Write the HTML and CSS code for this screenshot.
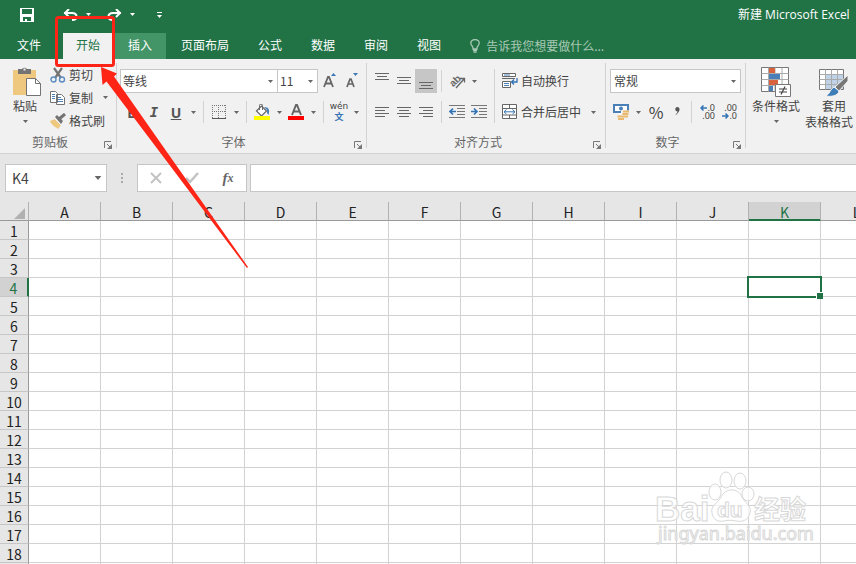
FILE: index.html
```html
<!DOCTYPE html>
<html lang="zh-CN">
<head>
<meta charset="utf-8">
<title>新建 Microsoft Excel</title>
<link rel="stylesheet" href="styles.css">
</head>
<body>
<svg class="defs" aria-hidden="true">
  <symbol id="caret" viewBox="0 0 5 3"><path d="M0 0h5L2.500 3z" fill="currentColor"/></symbol>
  <symbol id="launch" viewBox="0 0 8 8"><path d="M.5 7V.5H7M3 3l3 3" fill="none" stroke="currentColor"/><path d="M8 3v5H3z" fill="currentColor"/></symbol>
</svg>

<header class="titlebar">
  <div class="quick">
    <button aria-label="保存"><svg width="14" height="14" viewBox="0 0 14 14"><path d="M0 0h14v14H0z" fill="#fff"/><path d="M2 1h10v5H2zM3 9h8v4H7v-2H5v2H3z" fill="#217346"/></svg></button>
    <button class="undo" aria-label="撤消"><svg width="15" height="12" viewBox="0 0 15 12"><path d="M1 4h8c6 0 6 7 0 7M6 0L2 4l4 4" fill="none" stroke="#fff" stroke-width="2"/></svg><svg class="caret"><use href="#caret"/></svg></button>
    <button class="redo" aria-label="恢复"><svg width="15" height="12" viewBox="0 0 15 12"><path d="M14 4H6c-6 0-6 7 0 7M9 0l4 4-4 4" fill="none" stroke="#fff" stroke-width="2"/></svg><svg class="caret"><use href="#caret"/></svg></button>
    <button class="custom" aria-label="自定义快速访问工具栏"><svg width="5" height="6" viewBox="0 0 5 6"><path d="M0 0h5v1H0zM0 3h5L2.500 6z" fill="#fff"/></svg></button>
  </div>
  <div class="title">新建 Microsoft Excel</div>
</header>

<nav class="tabs">
  <a class="file" href="#file">文件</a>
  <a class="active" href="#home">开始</a>
  <a class="hover" href="#insert">插入</a>
  <a href="#layout">页面布局</a>
  <a href="#formulas">公式</a>
  <a href="#data">数据</a>
  <a href="#review">审阅</a>
  <a href="#view">视图</a>
  <label class="tell"><svg width="10" height="14" viewBox="0 0 10 14"><path d="M3 10V9C3 7 .8 6.500.8 4a4.200 3.500 0 0 1 8.400 0C9.200 6.500 7 7 7 9v1zM3 11.500h4M3.500 13.200h3" fill="none" stroke="#a9c9b5" stroke-width="1.300"/></svg><input type="text" placeholder="告诉我您想要做什么..." aria-label="告诉我您想要做什么"></label>
</nav>

<main class="ribbon">
  <section class="group clipboard">
    <div class="body">
      <button class="big paste"><svg width="30" height="30" viewBox="0 0 30 30"><path d="M1 3h23v25H1z" fill="#edc87e"/><path d="M6 2h4a3 3 0 0 1 5 0h4v5H6z" fill="#737373"/><path d="M11.500 1.500h2v2h-2z" fill="#f1f1f1"/><path d="M14.500 11.500h9l5 5v12h-14z" fill="#fff" stroke="#737373"/><path d="M23.500 11.500v5h5" fill="none" stroke="#737373"/></svg><span>粘贴</span><svg class="caret"><use href="#caret"/></svg></button>
      <div class="stack">
        <button><svg width="16" height="16" viewBox="0 0 16 16"><path d="M4 1l7 10M12 1L5 11" stroke="#737373" stroke-width="2.200"/><circle cx="3.500" cy="12.500" r="2.500" fill="none" stroke="#5b8cc0" stroke-width="1.400"/><circle cx="12" cy="12.500" r="2.500" fill="none" stroke="#5b8cc0" stroke-width="1.400"/></svg>剪切</button>
        <button><svg width="16" height="16" viewBox="0 0 16 16"><path d="M.5 1.500h5l2 2v9h-7zM6.500 4.500h5l3 3v7h-8z" fill="#fff" stroke="#737373"/><path d="M2 4.500h3M2 6.500h3M2 8.500h3M8 7.500h3M8 9.500h5M8 11.500h5" stroke="#4a7fb8"/></svg>复制<svg class="caret"><use href="#caret"/></svg></button>
        <button><svg width="16" height="16" viewBox="0 0 16 16"><path d="M0 8l5-2 6 6-3 4C6 14 2 13 0 8z" fill="#edc87e"/><path d="M5 4l2-2 6 6-2 3z" fill="#737373"/><path d="M9 6l6-5" stroke="#737373" stroke-width="3"/><path d="M5 6l6 6" stroke="#f1f1f1"/></svg>格式刷</button>
      </div>
    </div>
    <footer>剪贴板<button aria-label="剪贴板设置"><svg width="8" height="8"><use href="#launch"/></svg></button></footer>
  </section>

  <section class="group font">
    <div class="body column">
      <div class="row">
        <div class="combo face"><select aria-label="字体"><option>等线</option></select><svg class="caret"><use href="#caret"/></svg></div>
        <div class="combo size"><select aria-label="字号"><option>11</option></select><svg class="caret"><use href="#caret"/></svg></div>
        <button class="tool grow" aria-label="增大字号"><svg width="16" height="16" viewBox="0 0 16 16"><path d="M2 14L6 4h1l4 10M3.500 10.500h6" fill="none" stroke="#666" stroke-width="1.800"/><path d="M9 3h5l-2.500-3z" fill="#3c78b4"/></svg></button>
        <button class="tool" aria-label="减小字号"><svg width="16" height="16" viewBox="0 0 16 16"><path d="M3 14l3-8h1l3 8M4 11h5" fill="none" stroke="#666" stroke-width="1.700"/><path d="M9 0h5l-2.500 3z" fill="#3c78b4"/></svg></button>
      </div>
      <div class="row">
        <button class="tool letter bold">B</button><button class="tool letter italic">I</button><button class="tool letter under">U</button>
        <button class="drop" aria-label="下划线选项"><svg class="caret"><use href="#caret"/></svg></button><i class="sep"></i>
        <button class="tool" aria-label="边框"><svg width="14" height="14" viewBox="0 0 14 14"><path d="M0 .5h14M0 6.500h14M.5 0v14M6.500 0v14M13.500 0v14" stroke="#777" stroke-dasharray="1 1"/><path d="M0 13.500h14" stroke="#555"/></svg></button>
        <button class="drop" aria-label="边框选项"><svg class="caret"><use href="#caret"/></svg></button><i class="sep"></i>
        <button class="tool" aria-label="填充颜色"><svg width="16" height="16" viewBox="0 0 16 16"><path d="M2.500 7l5-5 5 5-5 5z" fill="#fff" stroke="#666" stroke-width="1.200"/><path d="M5.500 6V1.500a1.300 1.300 0 0 1 3 0V6" fill="none" stroke="#666"/><path d="M10 3c5 0 6 3 4.500 8L13 9V6z" fill="#4a7fb8"/><path d="M0 12h16v4H0z" fill="#ff0"/></svg></button>
        <button class="drop" aria-label="填充颜色选项"><svg class="caret"><use href="#caret"/></svg></button>
        <button class="tool" aria-label="字体颜色"><svg width="16" height="16" viewBox="0 0 16 16"><path d="M4 11l4-10h1l4 10M5.500 7.500h6" fill="none" stroke="#666" stroke-width="2"/><path d="M0 12h16v4H0z" fill="#f00"/></svg></button>
        <button class="drop" aria-label="字体颜色选项"><svg class="caret"><use href="#caret"/></svg></button><i class="sep"></i>
        <button class="tool phonetic" aria-label="拼音"><span>wén</span><b>文</b></button>
        <button class="drop" aria-label="拼音选项"><svg class="caret"><use href="#caret"/></svg></button>
      </div>
    </div>
    <footer>字体<button aria-label="字体设置"><svg width="8" height="8"><use href="#launch"/></svg></button></footer>
  </section>

  <section class="group align">
    <div class="body">
      <div class="column">
        <div class="row">
          <button class="tool" aria-label="顶端对齐"><svg width="14" height="16" viewBox="0 0 14 16"><path d="M0 .5h14M2 3.500h10M0 6.500h14" stroke="#666"/></svg></button>
          <button class="tool" aria-label="垂直居中"><svg width="14" height="16" viewBox="0 0 14 16"><path d="M0 4.500h14M2 7.500h10M0 10.500h14" stroke="#666"/></svg></button>
          <button class="tool pressed" aria-label="底端对齐"><svg width="14" height="16" viewBox="0 0 14 16"><path d="M0 9.500h14M2 12.500h10M0 15.500h14" stroke="#666"/></svg></button><i class="sep"></i>
          <button class="tool" aria-label="方向"><svg class="orient" width="18" height="16" viewBox="0 0 18 16"><path d="M8 15L16 6M12 5.500h4.500v4" fill="none" stroke="#666" stroke-width="1.300"/><text x="1" y="12" transform="rotate(-45 6 8)" class="ab">ab</text></svg></button>
          <button class="drop" aria-label="方向选项"><svg class="caret"><use href="#caret"/></svg></button>
        </div>
        <div class="row">
          <button class="tool" aria-label="左对齐"><svg width="14" height="12" viewBox="0 0 14 12"><path d="M0 1.500h14M0 4.500h10M0 7.500h14M0 10.500h10" stroke="#666"/></svg></button>
          <button class="tool" aria-label="居中"><svg width="14" height="12" viewBox="0 0 14 12"><path d="M0 1.500h14M2 4.500h10M0 7.500h14M2 10.500h10" stroke="#666"/></svg></button>
          <button class="tool" aria-label="右对齐"><svg width="14" height="12" viewBox="0 0 14 12"><path d="M0 1.500h14M4 4.500h10M0 7.500h14M4 10.500h10" stroke="#666"/></svg></button><i class="sep"></i>
          <button class="tool" aria-label="减少缩进量"><svg width="16" height="14" viewBox="0 0 16 14"><path d="M0 .5h16M8 3.500h8M8 6.500h8M8 9.500h8M0 12.500h16" stroke="#777"/><path d="M1 6.500h6M4 3.500l-3 3 3 3" fill="none" stroke="#3474b4" stroke-width="1.700"/></svg></button>
          <button class="tool" aria-label="增加缩进量"><svg width="16" height="14" viewBox="0 0 16 14"><path d="M0 .5h16M8 3.500h8M8 6.500h8M8 9.500h8M0 12.500h16" stroke="#777"/><path d="M0 6.500h6M3 3.500l3 3-3 3" fill="none" stroke="#3474b4" stroke-width="1.700"/></svg></button>
        </div>
      </div>
      <i class="sep tall"></i>
      <div class="column wide">
        <button class="row"><svg width="16" height="16" viewBox="0 0 16 16"><path d="M.5.5h13v3H.5zM.5 8.500h8v6h-8z" fill="#fff" stroke="#666"/><path d="M2 2h6M2 10.500h5M2 12.500h5" stroke="#4a7fb8"/><path d="M0 5.500h13" stroke="#666"/><path d="M15 5v4h-5M12 6.500L9.500 9l2.500 2.500" fill="none" stroke="#3474b4" stroke-width="1.300"/></svg>自动换行</button>
        <button class="row"><svg width="16" height="16" viewBox="0 0 16 16"><path d="M.5.5h14v14H.5zM.5 4.500h14M.5 11h14M7.500.5v4M7.500 11v3.500" fill="#fff" stroke="#666"/><path d="M2 7.800h11M4.500 5.500L2 7.800 4.500 10M10.500 5.500L13 7.800 10.500 10" fill="none" stroke="#3474b4"/></svg>合并后居中<svg class="caret"><use href="#caret"/></svg></button>
      </div>
    </div>
    <footer>对齐方式<button aria-label="对齐设置"><svg width="8" height="8"><use href="#launch"/></svg></button></footer>
  </section>

  <section class="group number">
    <div class="body column">
      <div class="row"><div class="combo format"><select aria-label="数字格式"><option>常规</option></select><svg class="caret"><use href="#caret"/></svg></div></div>
      <div class="row">
        <button class="tool" aria-label="会计数字格式"><svg width="17" height="16" viewBox="0 0 17 16"><path d="M0 0h16v9H0z" fill="#4a7fb8"/><path d="M2 3V2h2a4 4 0 0 1 8 0h2v5h-2a4 3 0 0 1-8 0H2z" fill="#fff"/><circle cx="8" cy="4.500" r="2" fill="#4a7fb8"/><path d="M9 6.500h7v8H4v-4h5z" fill="#f1f1f1"/><path d="M0 0h16v5h-2V2H2v5h6v2H0z" fill="#4a7fb8"/><path d="M10 7.500h6M9.500 10h6M10 12.500h5M4.500 12.500h6M5 15h6" stroke="#e9b96e" stroke-width="2"/></svg></button>
        <button class="drop" aria-label="货币选项"><svg class="caret"><use href="#caret"/></svg></button>
        <button class="tool percent" aria-label="百分比样式">%</button>
        <button class="tool comma" aria-label="千位分隔样式"><svg width="5" height="8" viewBox="0 0 5 8"><path d="M2.500 0C5 0 6 4 1 8L.5 7.500C2 6.500 2.500 5 2.500 4.500-.5 4.500-.5 0 2.500 0z" fill="#555"/></svg></button><i class="sep"></i>
        <button class="tool decimals" aria-label="增加小数位数"><span><svg width="7" height="6" viewBox="0 0 7 6"><path d="M1 3h6M3.500.5L1 3l2.500 2.500" fill="none" stroke="#3474b4" stroke-width="1.500"/></svg>.0</span><span>.00</span></button>
        <button class="tool decimals" aria-label="减少小数位数"><span>.00</span><span><svg width="7" height="6" viewBox="0 0 7 6"><path d="M0 3h6M3.500.5L6 3 3.500 5.500" fill="none" stroke="#3474b4" stroke-width="1.500"/></svg>.0</span></button>
      </div>
    </div>
    <footer>数字<button aria-label="数字设置"><svg width="8" height="8"><use href="#launch"/></svg></button></footer>
  </section>

  <section class="group styles">
    <div class="body">
      <button class="big"><svg width="30" height="30" viewBox="0 0 30 30"><path d="M.5.5h27v24H.5z" fill="#fff" stroke="#777"/><path d="M.5 6.500h27M.5 12.500h27M.5 18.500h27M7.500.5v24M14 .5v24M21 .5v24" stroke="#aaa"/><path d="M8 1h6v5H8zM8 13h9v5H8z" fill="#d9623f"/><path d="M8 7h11v5H8zM8 19h4v5H8z" fill="#4a7fb8"/><path d="M14.500 17.500h15v12h-15z" fill="#fff" stroke="#777"/><path d="M18 22h8M18 25h8M24 19.500l-4 8" stroke="#444" stroke-width="1.200"/></svg><span>条件格式</span><svg class="caret"><use href="#caret"/></svg></button>
      <button class="big table-style"><svg width="30" height="30" viewBox="0 0 30 30"><path d="M.5 2.500h24v20H.5z" fill="#fff" stroke="#777"/><path d="M7 8h17v14H7z" fill="#bfd2e8"/><path d="M.5 7.500h24M.5 12.500h24M.5 17.500h24M6.500 2.500v20M12.500 2.500v20M18.500 2.500v20" stroke="#aaa"/><path d="M29 8v6l-9 10-4-4z" fill="#777" stroke="#f1f1f1"/><path d="M15 20l5 4c-1 5-8 6-13 5 4-2 4-7 8-9z" fill="#3d7db8" stroke="#f1f1f1"/></svg><span>套用</span><span>表格格式</span></button>
    </div>
  </section>
</main>

<div class="formulabar">
  <div class="combo name"><input type="text" value="K4" aria-label="名称框"><svg class="caret"><use href="#caret"/></svg></div>
  <svg class="grip" width="2" height="12" viewBox="0 0 2 12"><path d="M0 1h2v2H0zM0 5h2v2H0zM0 9h2v2H0z" fill="#aaa"/></svg>
  <div class="actions">
    <button aria-label="取消"><svg width="12" height="12" viewBox="0 0 12 12"><path d="M1 1l10 10M11 1L1 11" stroke="#c3c3c3" stroke-width="2"/></svg></button>
    <button aria-label="输入"><svg width="14" height="12" viewBox="0 0 14 12"><path d="M1 6l4 4 8-9" fill="none" stroke="#c3c3c3" stroke-width="2.500"/></svg></button>
    <button class="fx" aria-label="插入函数">f<sub>x</sub></button>
  </div>
  <input class="formula" type="text" aria-label="编辑栏">
</div>

<div class="sheet">
  <table>
    <thead><tr id="columns"><th class="corner" aria-label="全选"><svg width="11" height="11" viewBox="0 0 11 11"><path d="M11 0v11H0z" fill="#b1b1b1"/></svg></th></tr></thead>
    <tbody id="cells"></tbody>
  </table>
</div>

<svg class="overlay" width="856" height="564" viewBox="0 0 856 564">
  <g class="watermark">
    <text x="655" y="521" class="brand">Bai</text>
    <path d="M712 513c-2-7 6-10 9-16 4-9 17-10 21 0 3 6 10 9 8 16-2 8-8 9-14 8-4-1-8-1-12 0-6 1-11-1-12-8z"/>
    <ellipse cx="715" cy="492" rx="6" ry="8"/><ellipse cx="726" cy="480" rx="6" ry="8"/><ellipse cx="740" cy="481" rx="6" ry="8"/><ellipse cx="748" cy="494" rx="6" ry="7"/>
    <text x="717" y="517" class="du">du</text>
    <text x="754" y="519" class="cn">经验</text>
    <text x="658" y="540" class="site">jingyan.baidu.com</text>
  </g>
  <rect x="56.500" y="17.500" width="57" height="48" rx="2" fill="none" stroke="#fe2517" stroke-width="3"/>
  <path d="M101 67L117 73.500 114 76.500 120 85 169 155 248 267 247 268 162 155 106.500 81.500 102.500 85z" fill="#fe2517"/>
</svg>
<script src="sheet.js"></script>
</body>
</html>
```
FILE: styles.css
```css
* { box-sizing: border-box; }
body {
  margin: 0; height: 100vh; overflow: hidden; position: relative;
  display: flex; flex-direction: column;
  font: 12px/16px "Noto Sans CJK SC", sans-serif; color: #444; background: #fff;
}
button, input, select { font: inherit; color: inherit; background: none; border: 0; padding: 0; margin: 0; outline: 0; }
button { display: flex; align-items: center; white-space: nowrap; }
svg { display: block; flex: none; }
.defs { position: absolute; width: 0; height: 0; }
.caret { width: 5px; height: 3px; color: #666; }

.titlebar { display: flex; justify-content: space-between; height: 33px; background: #217346; color: #fff; overflow: hidden; flex: none; }
.quick { display: flex; align-items: center; padding: 0 0 4px 20px; }
.quick .caret { color: #fff; }
.quick button { gap: 8px; }
.undo { margin-left: 29px; }
.redo { margin-left: 16px; }
.custom { margin-left: 22px; }
.title { flex: none; width: 118px; padding-top: 7px; white-space: nowrap; font-family: "Open Sans", "Noto Sans CJK SC", sans-serif; }

.tabs { display: flex; height: 26px; background: #217346; flex: none; }
.tabs a { color: #fff; text-decoration: none; padding: 0 14px 0 15px; line-height: 24px; white-space: nowrap; }
.tabs .file { padding: 0 22px 0 17px; }
.tabs .active { background: #f1f1f1; color: #217346; padding: 0 15px 0 13px; }
.tabs .hover { background: #439467; padding: 0 14px 0 13px; }
.tell { display: flex; align-items: center; gap: 6px; margin-left: 15px; }
.tell input { width: 160px; color: #fff; }
.tell input::placeholder { color: #a9c9b5; opacity: 1; }

.ribbon { display: flex; background: #f1f1f1; border-bottom: 1px solid #d2d2d2; height: 95px; flex: none; padding: 4px 0 5px; }
.group { display: flex; flex-direction: column; border-right: 1px solid #d2d2d2; flex: none; }
.group:last-child { border: 0; }
.body { display: flex; flex: 1; }
.column { display: flex; flex-direction: column; gap: 7px; padding-top: 6px; }
.row { display: flex; align-items: center; height: 24px; }
.group footer { position: relative; height: 13px; text-align: center; color: #666; padding-right: 16px; line-height: 14px; }
.group footer button { position: absolute; right: 4px; bottom: -1px; color: #777; }
.clipboard { width: 117px; }
.font { width: 250px; }
.align { width: 239px; }
.number { width: 140px; }
.big { flex-direction: column; padding-top: 4px; }
.big span { line-height: 15px; padding-top: 1px; text-align: center; }
.big .caret { margin-top: 7px; }
.paste { width: 50px; }
.paste > svg:first-child { margin-left: 3px; }
.table-style > svg, .table-style span:nth-of-type(1) { margin-left: 10px; }
.stack { display: flex; flex-direction: column; }
.stack button { height: 23px; gap: 3px; }
.stack .caret { margin-left: 7px; }

.combo { display: grid; align-items: center; height: 24px; background: #fff; border: 1px solid #c6c6c6; }
.combo > * { grid-area: 1 / 1; }
.combo select, .combo input { appearance: none; width: 100%; padding-left: 3px; }
.combo .caret { justify-self: end; margin-right: 4px; pointer-events: none; }
.font .combo select { padding-left: 2px; }
.face { width: 158px; margin-left: 3px; }
.size { width: 41px; margin-left: -1px; }
.format { width: 131px; }
.tool { width: 22px; height: 24px; justify-content: center; }
.grow { margin-left: 1px; }
.drop { width: 12px; height: 24px; justify-content: center; }
.sep { width: 1px; height: 22px; background: #d2d2d2; margin: 0 4px; }
.font .row:last-child { padding-left: 4px; }
.letter { font: bold 14px "Noto Sans", sans-serif; color: #555; }
.italic { font-family: "DejaVu Sans Mono", monospace; font-style: italic; }
.under { text-decoration: underline; }
.phonetic { flex-direction: column; }
.phonetic span { font: 9px/9px "DejaVu Sans", sans-serif; }
.phonetic b { font-size: 9px; line-height: 11px; color: #3474b4; }
.align .body > .column:first-child { padding-left: 4px; }
.pressed { background: #c6c6c6; }
.tall { height: 54px; margin: 6px 7px 0 4px; }
.wide .row { gap: 3px; }
.wide .caret { margin-left: 7px; }
.orient { overflow: visible; }
.ab { font: bold 10px "Liberation Sans", sans-serif; fill: #666; }
.number .body { padding-left: 4px; }
.percent { font-size: 16px; margin-left: 1px; }
.comma { width: 20px; padding-bottom: 2px; }
.decimals { flex-direction: column; align-items: flex-end; justify-content: center; padding-right: 3px; font: 9px/8px "Noto Sans", sans-serif; }
.decimals span { display: flex; align-items: center; }
.styles .body { padding-left: 6px; gap: 5px; }

.formulabar { display: flex; height: 48px; background: #e6e6e6; padding: 10px 0 10px 5px; flex: none; }
.name { width: 102px; height: 28px; font-size: 14px; }
.combo.name input { padding-left: 6px; }
.name .caret { width: 8px; height: 4px; }
.grip { margin: 8px 14px 0; }
.actions { display: flex; width: 110px; height: 28px; background: #fff; border: 1px solid #c6c6c6; }
.actions button { flex: 1; justify-content: center; }
.actions .fx { font: italic bold 15px "Liberation Serif", serif; color: #666; }
.fx sub { font-size: 12px; }
.formula { flex: 1; min-width: 0; height: 28px; margin-left: 3px; background: #fff; border: 1px solid #c6c6c6; border-right: 0; }

.sheet { flex: 1; overflow: hidden; }
table { table-layout: fixed; width: 893px; border-collapse: separate; border-spacing: 0; font-size: 14px; line-height: 16px; color: #222; }
th { font-weight: 400; background: #e6e6e6; padding: 2px 0 0; height: 19px; }
thead th { width: 72px; border-right: 1px solid #b1b1b1; border-bottom: 1px solid #999; }
thead .corner { width: 29px; }
.corner svg { margin: 2px 0 0 14px; }
tbody th { border-right: 1px solid #999; border-bottom: 1px solid #c6c6c6; }
td { height: 19px; padding: 0; border-right: 1px solid #d2d2d2; border-bottom: 1px solid #d2d2d2; }
thead .current { background: #d2d2d2; color: #217346; border-bottom-color: #217346; box-shadow: inset 0 -1px #217346; }
tbody .current { background: #d2d2d2; color: #217346; border-right: 2px solid #217346; }
.selected { position: relative; }
.selected::before { content: ""; position: absolute; inset: -2px; border: 2px solid #217346; }
.selected::after { content: ""; position: absolute; right: -3px; bottom: -3px; width: 6px; height: 6px; background: #217346; border: solid #fff; border-width: 1px 0 0 1px; }

.overlay { position: absolute; top: 0; left: 0; pointer-events: none; }
.watermark { fill: #fff; fill-opacity: .7; stroke: #d8d8d8; stroke-width: 1; }
.brand { font: bold 35px "Liberation Sans", sans-serif; }
.du { font: bold 21px "Liberation Sans", sans-serif; }
.cn { font: bold 26px "Noto Sans CJK SC", sans-serif; }
.site { font: 18px "Noto Sans", sans-serif; }
```
FILE: sheet.js
```js
const letters = "ABCDEFGHIJKL";
const active = { column: "K", row: 4 };
const head = document.getElementById("columns");
const cells = document.getElementById("cells");

function heading(text, current) {
  const th = document.createElement("th");
  th.textContent = text;
  if (current) th.className = "current";
  return th;
}

for (const letter of letters) head.append(heading(letter, letter === active.column));

for (let row = 1; row <= 19; row++) {
  const tr = document.createElement("tr");
  tr.append(heading(row, row === active.row));
  for (const letter of letters) {
    const td = document.createElement("td");
    if (row === active.row && letter === active.column) td.className = "selected";
    tr.append(td);
  }
  cells.append(tr);
}
```
